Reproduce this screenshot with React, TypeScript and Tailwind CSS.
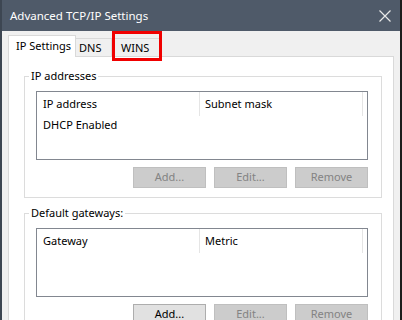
import React from 'react';

const Btn = ({ label, disabled }: { label: string; disabled?: boolean }) => (
  <div
    className={
      disabled
        ? 'w-[73px] h-[21px] flex items-center justify-center border border-[#bfbfbf] bg-[#cccccc] text-[#838383]'
        : 'w-[73px] h-[21px] flex items-center justify-center border border-[#adadad] bg-[#e1e1e1] text-black'
    }
  >
    {label}
  </div>
);

const GroupBox = ({
  title,
  cols,
  rows,
  addEnabled,
}: {
  title: string;
  cols: [string, string];
  rows: string[];
  addEnabled?: boolean;
}) => (
  <fieldset className="border border-[#dcdcdc] ml-[15px] mr-[11px] pl-[11px] pr-[13px] pb-[9px]">
    <legend className="-ml-[7px] px-[2px] leading-[16px]">{title}</legend>
    <div className="mt-[7px] h-[69px] border border-[#828790] bg-white">
      <div className="flex h-[24px]">
        <div className="w-[163px] border-r border-[#e5e5e5] pl-[6px] flex items-center">{cols[0]}</div>
        <div className="w-[163px] border-r border-[#e5e5e5] pl-[5px] flex items-center">{cols[1]}</div>
      </div>
      {rows.map((r) => (
        <div key={r} className="h-[18px] pl-[6px] flex items-center">
          {r}
        </div>
      ))}
    </div>
    <div className="flex justify-end gap-[8px] mt-[7px]">
      <Btn label="Add..." disabled={!addEnabled} />
      <Btn label="Edit..." disabled />
      <Btn label="Remove" disabled />
    </div>
  </fieldset>
);

export default function App() {
  return (
    <div className="w-[402px] h-[320px] overflow-hidden flex flex-col bg-[#f0f0f0] border-l-2 border-r-2 border-l-[#3d4652] border-r-[#1c1c1c] font-['Noto_Sans',sans-serif] text-[11px] text-black whitespace-nowrap">
      <div className="h-[31px] shrink-0 bg-[#4f5a69] flex items-center justify-between pl-[8px] pr-[9px] text-white">
        <span className="text-[11.5px] leading-none">Advanced TCP/IP Settings</span>
        <svg width="12" height="12" viewBox="0 0 12 12" className="shrink-0">
          <path d="M0.5 0.5 L11.5 11.5 M11.5 0.5 L0.5 11.5" stroke="#e8e8e8" strokeWidth="1.2" />
        </svg>
      </div>
      <div className="flex-1 flex flex-col px-[6px] pt-[4px]">
        <div className="relative flex items-end h-[21px]">
          <div className="relative z-10 w-[68px] h-[22px] -mb-px border border-b-0 border-[#d9d9d9] bg-white pl-[7px] pt-[2px]">
            IP Settings
          </div>
          <div className="w-[36px] h-[18px] border border-l-0 border-b-0 border-[#d9d9d9] pl-[3px] pt-[1px]">DNS</div>
          <div className="w-[48px] h-[18px] border border-l-0 border-b-0 border-[#d9d9d9] pl-[9px] pt-[1px]">WINS</div>
          <div className="absolute left-[104px] top-[-4px] w-[50px] h-[30px] border-[3px] border-[#f00000]" />
        </div>
        <div className="flex-1 border border-[#d9d9d9] bg-white pt-[11px] flex flex-col gap-[7px]">
          <GroupBox title="IP addresses" cols={['IP address', 'Subnet mask']} rows={['DHCP Enabled']} />
          <GroupBox title="Default gateways:" cols={['Gateway', 'Metric']} rows={[]} addEnabled />
        </div>
      </div>
    </div>
  );
}
